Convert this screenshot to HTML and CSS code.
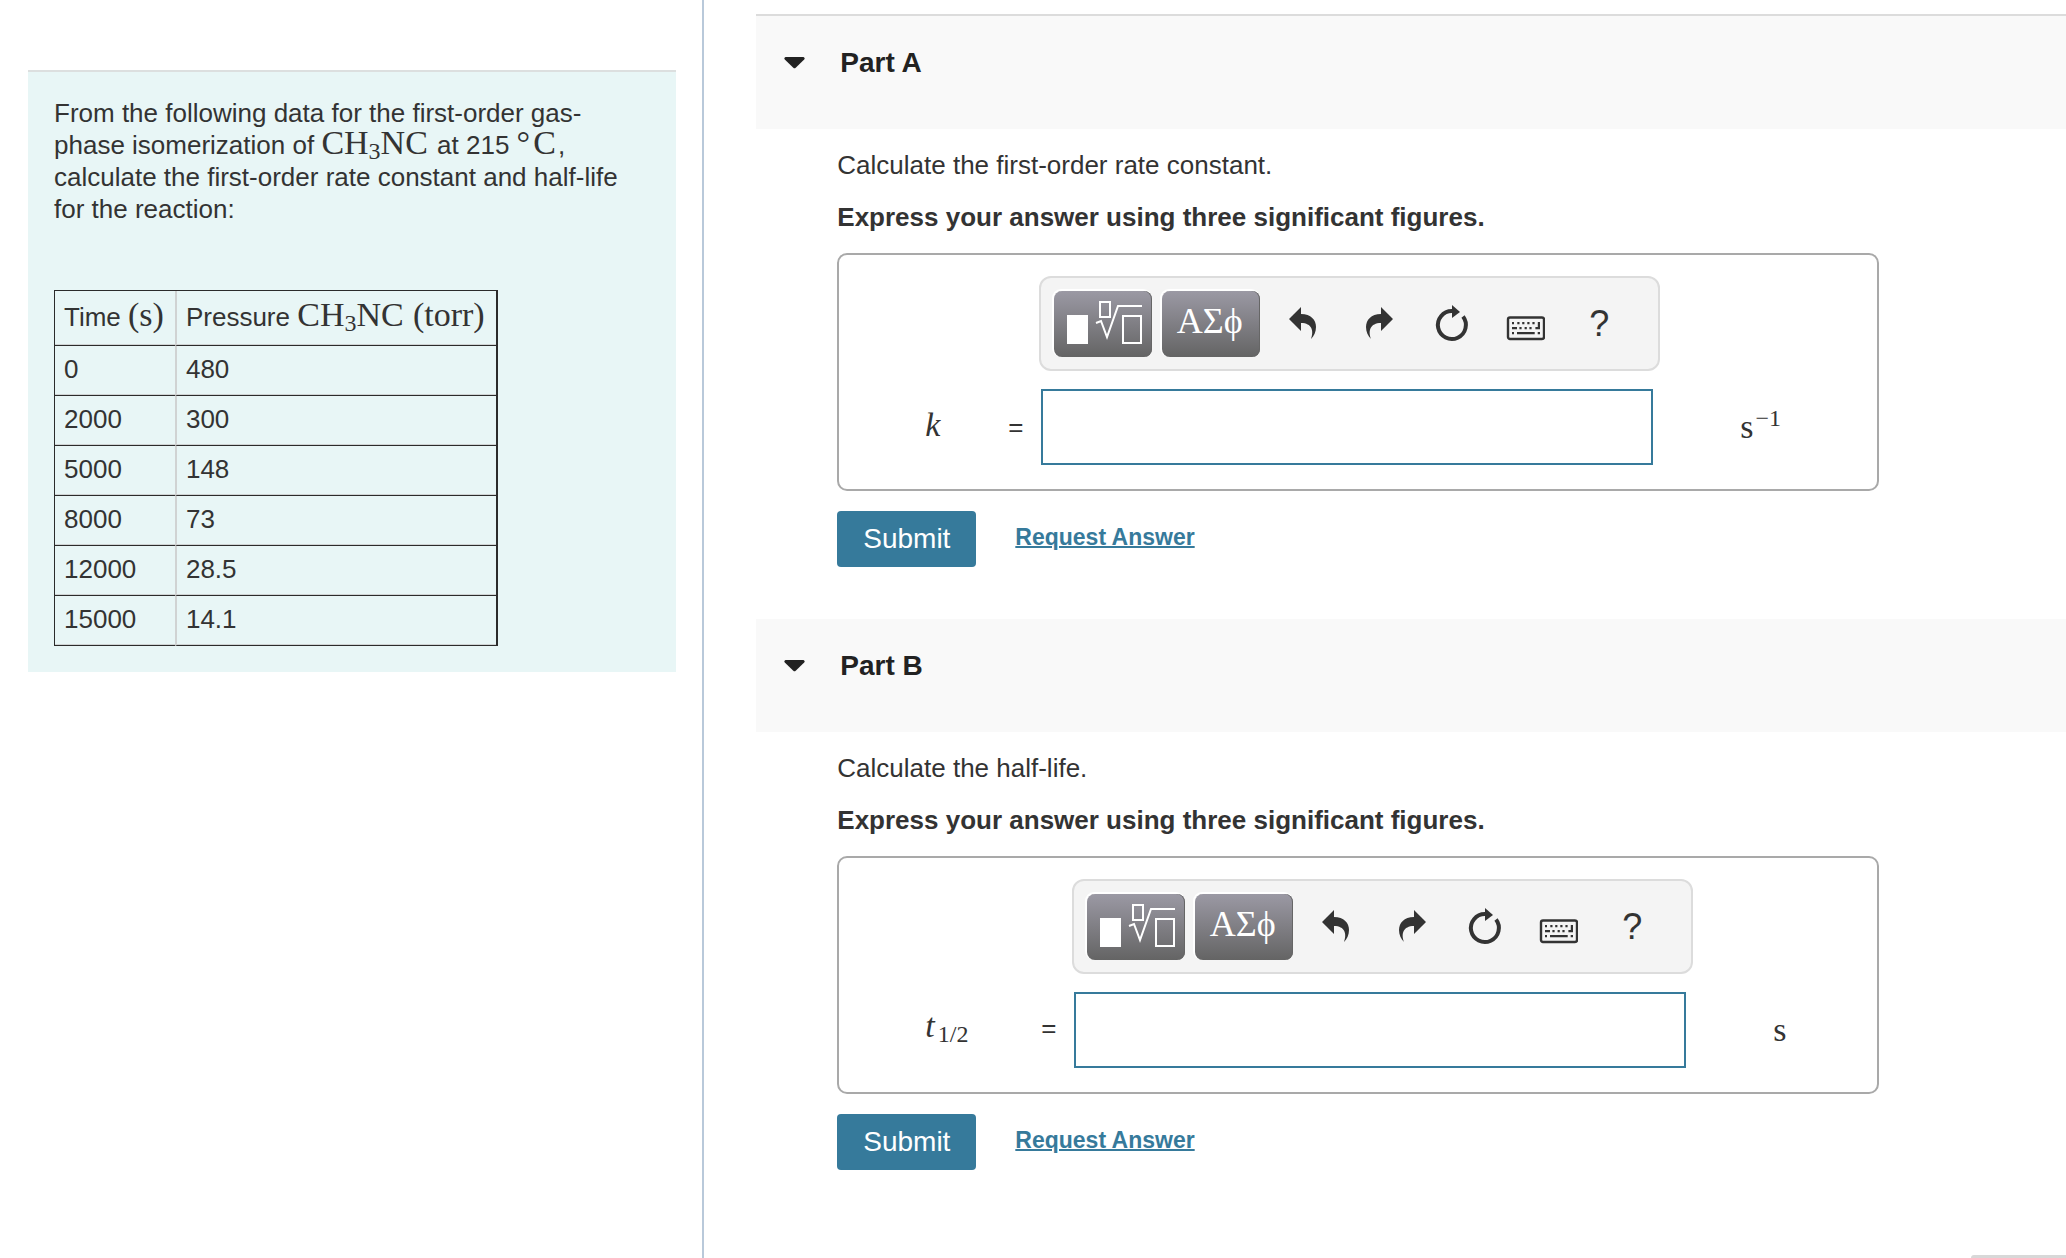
FILE: index.html
```html
<!DOCTYPE html>
<html lang="en">
<head>
  <meta charset="UTF-8">
  <title>First-order rate constant</title>
  <link rel="stylesheet" href="styles.css">
</head>
<body>

  <!-- shared toolbar icons -->
  <svg class="sprite" width="0" height="0" aria-hidden="true">
    <symbol id="icon-template" viewBox="0 0 98 66">
      <rect x="13" y="24" width="21" height="29" fill="#fff"/>
      <g fill="none" stroke="#fff" stroke-width="2">
        <rect x="46" y="11" width="10" height="15"/>
        <path d="M42 32l5-2 6 16 11-31h24"/>
        <rect x="69" y="25" width="18" height="27"/>
      </g>
    </symbol>
    <symbol id="icon-undo" viewBox="0 0 40 40">
      <path d="M6 15L18 3v7c10 0 15 6 15 13 0 5-2 9-5 12 3-8 1-16-10-16v8z"/>
    </symbol>
    <symbol id="icon-redo" viewBox="0 0 40 40">
      <path d="M36 15L24 3v7C14 10 9 16 9 23c0 5 2 9 5 12-3-8-1-16 10-16v8z"/>
    </symbol>
    <symbol id="icon-reset" viewBox="0 0 40 40">
      <path d="M32 12.5A14 14 0 1 1 21 7" fill="none" stroke="#333" stroke-width="4"/>
      <path d="M21 1l8 7-8 6z"/>
    </symbol>
    <symbol id="icon-keyboard" viewBox="0 0 40 40">
      <rect x="3" y="13.5" width="36" height="21.5" rx="2" fill="none" stroke="#333" stroke-width="2.4"/>
      <path d="M7 18h2v2.2H7zM12.3 18h2.2v2.2h-2.2zM17.2 18h2.2v2.2h-2.2zM22.3 18h2.2v2.2h-2.2zM27.4 18h2.2v2.2h-2.2z"/>
      <path d="M7 23h5v2.2H7zM14.4 23h2.2v2.2h-2.2zM19.6 23h2.2v2.2h-2.2zM24.4 23h2.2v2.2h-2.2zM30.4 23h2.4v-5H35v7.2h-4.6z"/>
      <path d="M7 28h2v2.2H7zM12 28h17.7v2.2H12zM32.7 28H35v2.2h-2.3z"/>
    </symbol>
  </svg>

  <div class="page">

    <aside class="sidebar">
      <div class="problem">
        <p class="problem-text">From the following data for the first-order gas-phase isomerization of <span class="math">CH<sub>3</sub>NC</span> at 215 <span class="math">°<span class="celsius">C</span></span>, calculate the first-order rate constant and half-life for the reaction:</p>
        <table class="data">
          <thead>
            <tr>
              <th>Time <span class="math">(s)</span></th>
              <th>Pressure <span class="math">CH<sub>3</sub>NC</span> <span class="math">(torr)</span></th>
            </tr>
          </thead>
          <tbody>
            <tr><td>0</td><td>480</td></tr>
            <tr><td>2000</td><td>300</td></tr>
            <tr><td>5000</td><td>148</td></tr>
            <tr><td>8000</td><td>73</td></tr>
            <tr><td>12000</td><td>28.5</td></tr>
            <tr><td>15000</td><td>14.1</td></tr>
          </tbody>
        </table>
      </div>
    </aside>

    <main class="parts">

      <details class="part" open>
        <summary class="part-header">
          <svg class="caret" viewBox="0 0 21 12" width="21" height="12"><path d="M1.500 0h18q2 1 .7 2.500l-8.500 8.300q-1.200 1-2.400 0L.8 2.500Q-.5 1 1.500 0z"/></svg>
          <h2>Part A</h2>
        </summary>
        <div class="part-body">
          <p>Calculate the first-order rate constant.</p>
          <p><b>Express your answer using three significant figures.</b></p>
          <div class="answer-box">
            <div class="toolbar">
              <button type="button" class="tool" aria-label="Templates"><svg width="98" height="66"><use href="#icon-template"/></svg></button>
              <button type="button" class="tool greek">ΑΣϕ</button>
              <div class="icons">
                <button type="button" class="icon" aria-label="Undo"><svg width="40" height="40"><use href="#icon-undo"/></svg></button>
                <button type="button" class="icon" aria-label="Redo"><svg width="40" height="40"><use href="#icon-redo"/></svg></button>
                <button type="button" class="icon" aria-label="Reset"><svg width="40" height="40"><use href="#icon-reset"/></svg></button>
                <button type="button" class="icon" aria-label="Keyboard shortcuts"><svg width="40" height="40"><use href="#icon-keyboard"/></svg></button>
                <button type="button" class="icon">?</button>
              </div>
            </div>
            <label class="symbol math" for="answer-a"><i>k</i></label>
            <span class="equals">=</span>
            <input type="text" class="answer" id="answer-a">
            <span class="unit math">s<sup>−1</sup></span>
          </div>
          <div class="actions">
            <button type="button" class="submit">Submit</button>
            <a href="#" class="request">Request Answer</a>
          </div>
        </div>
      </details>

      <details class="part" open>
        <summary class="part-header">
          <svg class="caret" viewBox="0 0 21 12" width="21" height="12"><path d="M1.500 0h18q2 1 .7 2.500l-8.500 8.300q-1.200 1-2.400 0L.8 2.500Q-.5 1 1.500 0z"/></svg>
          <h2>Part B</h2>
        </summary>
        <div class="part-body">
          <p>Calculate the half-life.</p>
          <p><b>Express your answer using three significant figures.</b></p>
          <div class="answer-box">
            <div class="toolbar">
              <button type="button" class="tool" aria-label="Templates"><svg width="98" height="66"><use href="#icon-template"/></svg></button>
              <button type="button" class="tool greek">ΑΣϕ</button>
              <div class="icons">
                <button type="button" class="icon" aria-label="Undo"><svg width="40" height="40"><use href="#icon-undo"/></svg></button>
                <button type="button" class="icon" aria-label="Redo"><svg width="40" height="40"><use href="#icon-redo"/></svg></button>
                <button type="button" class="icon" aria-label="Reset"><svg width="40" height="40"><use href="#icon-reset"/></svg></button>
                <button type="button" class="icon" aria-label="Keyboard shortcuts"><svg width="40" height="40"><use href="#icon-keyboard"/></svg></button>
                <button type="button" class="icon">?</button>
              </div>
            </div>
            <label class="symbol symbol-wide math" for="answer-b"><i>t</i><sub>1/2</sub></label>
            <span class="equals">=</span>
            <input type="text" class="answer" id="answer-b">
            <span class="unit math">s</span>
          </div>
          <div class="actions">
            <button type="button" class="submit">Submit</button>
            <a href="#" class="request">Request Answer</a>
          </div>
        </div>
      </details>

      <div class="drawer"></div>
    </main>

  </div>

</body>
</html>
```
FILE: styles.css
```css
* { box-sizing: border-box; }
body {
  margin: 0;
  background: #fff;
  color: #333;
  font-family: "Liberation Sans", Arial, sans-serif;
  font-size: 26px;
  line-height: 32px;
}
p, h2 { margin: 0; }
button {
  padding: 0;
  border: 0;
  background: none;
  color: inherit;
  font-family: inherit;
  cursor: pointer;
}
svg { display: block; fill: #333; }
.sprite { position: absolute; }

.page {
  display: grid;
  grid-template-columns: minmax(0, 15fr) minmax(0, 29fr);
  min-height: 100vh;
}

/* math text */
.math {
  font-family: "Liberation Serif", "Times New Roman", serif;
  font-size: 34px;
  line-height: 0;
}
.math sub, .math sup {
  font-size: 24px;
  line-height: 0;
}
.math sub { vertical-align: -5px; }
.math sup { margin-left: 2px; vertical-align: 12px; }
.problem .math { margin-right: 2px; }
.celsius { margin-left: 3px; }

/* left column */
.sidebar {
  padding: 70px 26px 28px 28px;
  border-right: 2px solid #b9c9da;
}
.problem {
  padding: 25px 26px 26px;
  border-top: 2px solid #dcdfdf;
  background: #e8f6f6;
}
.data {
  margin-top: 65px;
  border: 1px solid #2b2b2b;
  border-right-width: 2px;
  border-bottom: 0;
  border-spacing: 0;
}
.data th, .data td {
  height: 50px;
  padding: 0 9px 4px;
  border-bottom: 1px solid #2b2b2b;
  box-shadow: inset 0 -1px 0 #cfd3d3;
  font-weight: normal;
  text-align: left;
}
.data th { height: 55px; padding-bottom: 2px; }
.data th + th, .data td + td { border-left: 2px solid #d0d3d3; }

/* right column */
.parts {
  display: flex;
  flex-direction: column;
  padding: 14px 0 0 52px;
}
.part:first-child .part-header { border-top: 2px solid #dcdcdc; }
.part-header {
  display: flex;
  align-items: center;
  gap: 35px;
  padding: 31px 28px 50px;
  background: #f9f9f9;
  color: #222;
  list-style: none;
  cursor: pointer;
}
.part-header h2 {
  font-size: 28px;
  line-height: 32px;
}
.caret { fill: #222; }
.part-body {
  display: flex;
  flex-direction: column;
  gap: 20px;
  padding: 20px 28px 52px 81px;
}

.answer-box {
  display: grid;
  grid-template-columns: auto auto 621px 1fr;
  align-items: center;
  row-gap: 18px;
  width: 1042px;
  max-width: 100%;
  padding: 21px 24px 24px 86px;
  border: 2px solid #a9a9a9;
  border-radius: 10px;
}
.toolbar {
  grid-column: 3;
  display: flex;
  align-items: center;
  gap: 10px;
  height: 95px;
  padding: 0 13px;
  border: 2px solid #dcdcdc;
  border-radius: 12px;
  background: #f4f4f4;
}
.symbol {
  grid-column: 1;
  min-width: 83px;
  padding-bottom: 4px;
  line-height: 32px;
}
.symbol-wide {
  min-width: 116px;
  padding-bottom: 8px;
}
.symbol sub { margin-left: 3px; }
.equals { width: 31px; }
.symbol-wide + .equals { padding-bottom: 4px; }
.answer {
  width: 612px;
  height: 76px;
  margin-left: 2px;
  padding: 0 12px;
  border: 2px solid #367a9b;
  background: #fff;
  font: inherit;
}
.unit { padding-left: 80px; line-height: 32px; }

.tool {
  width: 98px;
  height: 66px;
  border-radius: 8px;
  background: linear-gradient(#9b99a4, #646464);
  box-shadow: -1px -1px 0 1px #fff, inset -1px 0 0 #666;
  color: #fff;
  font-family: "Liberation Serif", "Times New Roman", serif;
  font-size: 36px;
}
.greek { padding: 0 3px 5px 0; }
.icons {
  display: flex;
  gap: 34px;
  margin-left: 13px;
}
.icon {
  width: 40px;
  height: 40px;
  font-size: 36px;
  line-height: 40px;
}

.actions {
  display: flex;
  align-items: center;
  gap: 39px;
}
.submit {
  width: 139px;
  height: 56px;
  border-radius: 4px;
  background: #367a9b;
  color: #fff;
  font-size: 28px;
}
.request {
  padding-bottom: 4px;
  color: #367a9b;
  font-size: 23px;
  font-weight: bold;
  text-decoration-thickness: 2px;
}

/* top edge of the panel below the fold */
.drawer {
  align-self: flex-end;
  width: 95px;
  height: 3px;
  margin-top: auto;
  border-top-left-radius: 3px;
  background: #d8d8d8;
}
```
